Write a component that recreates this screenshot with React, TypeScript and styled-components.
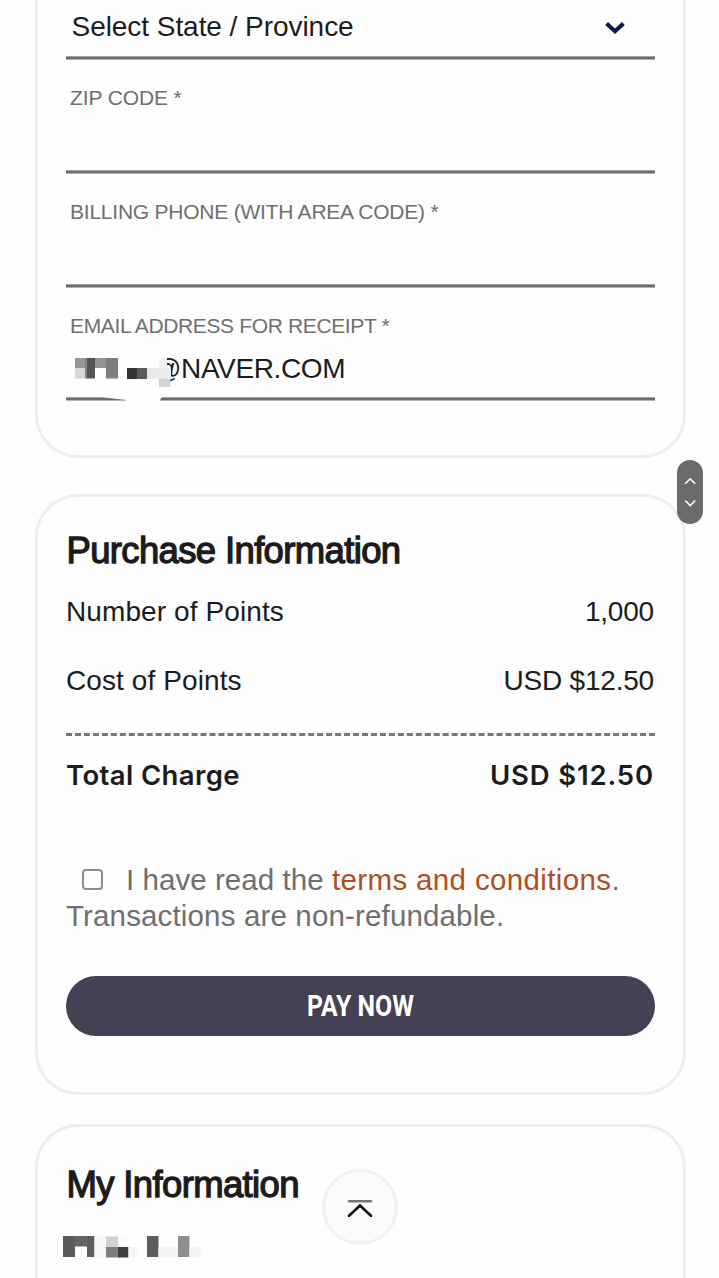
import React from "react";
import styled, { createGlobalStyle } from "styled-components";

const GlobalStyle = createGlobalStyle`
  *, *::before, *::after { box-sizing: border-box; }
  html, body { margin: 0; padding: 0; background: #fefefe; }
  body { overflow: hidden; }
`;

const ink = "#1c1c1c";
const muted = "#6f6f6f";

const Page = styled.main`
  position: relative;
  width: 719px;
  height: 1278px;
  overflow: hidden;
  padding: 0 33px 0 35px;
  display: flex;
  flex-direction: column;
  background: #fefefe;
  color: ${ink};
  font-family: "Liberation Sans", Arial, sans-serif;
`;

const Card = styled.section<{ $height: number; $gap?: number; $cut?: "top" | "bottom" }>`
  flex: none;
  height: ${(p) => p.$height}px;
  margin-top: ${(p) => p.$gap ?? 0}px;
  padding: 0 28px;
  border: 3px solid #eeeeee;
  border-radius: 43px;
  ${(p) => p.$cut === "top" && "border-top: 0; border-top-left-radius: 0; border-top-right-radius: 0;"}
  ${(p) => p.$cut === "bottom" && "border-bottom: 0; border-bottom-left-radius: 0; border-bottom-right-radius: 0;"}
`;

const SelectRow = styled.div`
  display: flex;
  align-items: center;
  justify-content: space-between;
  height: 56px;
  padding: 0 29px 2px 5.5px;
  font-size: 28px;
  letter-spacing: -0.05px;
  svg { position: relative; top: 0.5px; }
`;

const Rule = styled.div`
  height: 4px;
  background: linear-gradient(#a2a2a2 1px, #6c6c6c 1px, #6c6c6c 3px, #b4b4b4 3px);
`;

const Label = styled.label<{ $tracking?: number }>`
  display: block;
  margin-top: 26px;
  padding-left: 4px;
  height: 24px;
  line-height: 24px;
  font-size: 21px;
  letter-spacing: ${(p) => p.$tracking ?? -0.23}px;
  color: ${muted};
`;

const Value = styled.div<{ $height?: number }>`
  position: relative;
  height: ${(p) => p.$height ?? 60}px;
  line-height: ${(p) => (p.$height ?? 60) + 2}px;
  padding-left: 87px;
  font-size: 28px;
  letter-spacing: -0.38px;
`;

const Redaction = styled.svg`
  position: absolute;
  left: 0;
  top: 0;
  z-index: 1;
`;

const Heading = styled.h2<{ $top: number }>`
  margin: ${(p) => p.$top}px 0 0;
  height: 44px;
  line-height: 44px;
  padding-left: 0.5px;
  font-size: 36.5px;
  font-weight: 400;
  letter-spacing: -0.65px;
  -webkit-text-stroke: 1.3px ${ink};
`;

const Row = styled.div<{ $top: number; $total?: boolean }>`
  display: flex;
  justify-content: space-between;
  margin-top: ${(p) => p.$top}px;
  height: 36px;
  line-height: 36px;
  padding-right: 1px;
  font-size: 28px;
  letter-spacing: 0.1px;
  ${(p) => p.$total && `font-family: Inter, sans-serif; font-weight: 600; font-size: 27.5px; letter-spacing: 0.4px;`}
`;

const Amount = styled.span<{ $total?: boolean }>`
  letter-spacing: ${(p) => (p.$total ? 0.85 : -0.2)}px;
`;

const Divider = styled.hr`
  margin: 34px 0 0;
  border: 0;
  border-top: 3px dashed #777;
`;

const Terms = styled.div`
  margin-top: 68.5px;
  font-size: 29.5px;
  line-height: 36px;
  letter-spacing: 0.15px;
  color: ${muted};
`;

const TermsLine = styled.div`
  display: flex;
  align-items: center;
  height: 36px;
  white-space: pre;
`;

const Checkbox = styled.span`
  width: 21px;
  height: 21px;
  margin: 0 23px 0 16px;
  border: 2px solid #8c8c8c;
  border-radius: 4px;
`;

const TermsText = styled.span`
  letter-spacing: 0.06px;
`;

const TermsLink = styled.a`
  color: #b04e1e;
  letter-spacing: 0.36px;
`;

const PayButton = styled.button`
  display: flex;
  align-items: center;
  justify-content: center;
  width: 100%;
  height: 60.5px;
  margin-top: 42px;
  padding: 0;
  border: 0;
  border-radius: 31px;
  background: #454053;
  color: #fff;
`;

const PayText = styled.span`
  font: 700 29px/60px Roboto, sans-serif;
  transform: scaleX(0.855);
`;

const Mosaic = styled.svg`
  display: block;
  margin: 29px 0 0 -6px;
`;

const ScrollThumb = styled.div`
  position: absolute;
  left: 676.5px;
  top: 460.4px;
  width: 26.5px;
  height: 64px;
  border-radius: 14px;
  background: #6b6b6b;
  svg { display: block; }
`;

const TopButton = styled.button`
  position: absolute;
  left: 322px;
  top: 1169px;
  width: 76px;
  height: 76px;
  padding: 0;
  border: 3px solid #f1f1f1;
  border-radius: 50%;
  background: #fbfbfb;
  display: grid;
  place-items: center;
`;

type Block = [number, number, number, number, string];

const emailBlocks: Block[] = [
  [75, 358, 10, 10, "#959595"],
  [75, 368, 10, 10.5, "#d8d8d8"],
  [85, 358, 2, 20.5, "#858585"],
  [87, 358, 8, 20.5, "#555"],
  [95, 358, 11, 10, "#959595"],
  [106, 358, 12, 20.5, "#7d7d7d"],
  [127, 368, 10, 11, "#363636"],
  [137, 368, 10, 11, "#5a5a5a"],
  [147, 368, 12, 10.5, "#e8e8e8"],
  [159, 358, 8, 10, "#f1f1f1"],
  [159, 368, 12, 10.5, "#ececec"],
  [159, 378.5, 11.5, 8.5, "#d4d4d4"],
];

const nameBlocks: Block[] = [
  [0, 0, 12, 21, "#5a5a5a"],
  [12, 0, 12, 10.5, "#646464"],
  [24, 0, 7.5, 21, "#5e5e5e"],
  [31.5, 0, 11.5, 21, "#f7f7f7"],
  [43, 0.5, 12, 10.5, "#d0d0d0"],
  [43, 11, 12, 10.5, "#7d7d7d"],
  [55, 0.5, 10, 10.5, "#f9f9f9"],
  [55, 11, 10.5, 10.5, "#3f3f3f"],
  [65.5, 11, 9, 10.5, "#f6f6f6"],
  [84, 0, 11.5, 21, "#5c5c5c"],
  [95.5, 11, 19.5, 10, "#f3f3f3"],
  [115, 0, 11.5, 21, "#8e8e8e"],
  [126.5, 11, 11, 10, "#f4f4f4"],
];

const Blocks = ({ items }: { items: Block[] }) => (
  <>
    {items.map(([x, y, w, h, fill], i) => (
      <rect key={i} x={x} y={y} width={w} height={h} fill={fill} />
    ))}
  </>
);

export default function App() {
  return (
    <>
      <GlobalStyle />
      <Page>
        <Card $height={458} $cut="top">
          <SelectRow>
            <span>Select State / Province</span>
            <svg width="22" height="14" viewBox="0 0 22 14" fill="none" stroke="#10163f" strokeWidth="4">
              <path d="M2.6 2.5 L11 10.2 L19.4 2.5" />
            </svg>
          </SelectRow>
          <Rule />
          <Label $tracking={-0.12}>ZIP CODE *</Label>
          <Value />
          <Rule />
          <Label>BILLING PHONE (WITH AREA CODE) *</Label>
          <Value />
          <Rule />
          <Label $tracking={-0.36}>EMAIL ADDRESS FOR RECEIPT *</Label>
          <Value $height={59}>
            @NAVER.COM
            <Redaction width="110" height="66" viewBox="66 338 110 66">
              <rect x="150" y="355" width="14" height="30" fill="#fefefe" />
              <path d="M98 396.5 L111 398.3 L126 400 L126 403 L158 403 L162 397 L162 396 Z" fill="#fefefe" />
              <Blocks items={emailBlocks} />
            </Redaction>
          </Value>
          <Rule />
        </Card>

        <Card $height={601} $gap={36}>
          <Heading $top={32}>Purchase Information</Heading>
          <Row $top={21}>
            <span>Number of Points</span>
            <Amount>1,000</Amount>
          </Row>
          <Row $top={33}>
            <span>Cost of Points</span>
            <Amount>USD $12.50</Amount>
          </Row>
          <Divider />
          <Row $top={21} $total>
            <span>Total Charge</span>
            <Amount $total>USD $12.50</Amount>
          </Row>
          <Terms>
            <TermsLine>
              <Checkbox role="checkbox" aria-checked="false" />
              <TermsText>
                I have read the <TermsLink>terms and conditions</TermsLink>.
              </TermsText>
            </TermsLine>
            <TermsLine>Transactions are non-refundable.</TermsLine>
          </Terms>
          <PayButton>
            <PayText>PAY NOW</PayText>
          </PayButton>
        </Card>

        <Card $height={180} $gap={29} $cut="bottom">
          <Heading $top={35.5}>My Information</Heading>
          <Mosaic width="142" height="24" viewBox="-3 0 142 24">
            <Blocks items={nameBlocks} />
          </Mosaic>
        </Card>

        <ScrollThumb>
          <svg width="27" height="64" viewBox="0 0 27 64" fill="none" stroke="#fff" strokeWidth="1.6">
            <path d="M8.2 23.8 L13.2 18.8 L18.2 23.8 M8.2 40.5 L13.2 45.5 L18.2 40.5" />
          </svg>
        </ScrollThumb>
        <TopButton aria-label="Back to top">
          <svg width="28" height="22" viewBox="0 0 28 22" fill="none" strokeLinecap="round">
            <path d="M3 5.2 H25" stroke="#777" strokeWidth="2.4" />
            <path d="M3 19.8 L14 9.6 L25 19.8" stroke="#080808" strokeWidth="2.6" />
          </svg>
        </TopButton>
      </Page>
    </>
  );
}
